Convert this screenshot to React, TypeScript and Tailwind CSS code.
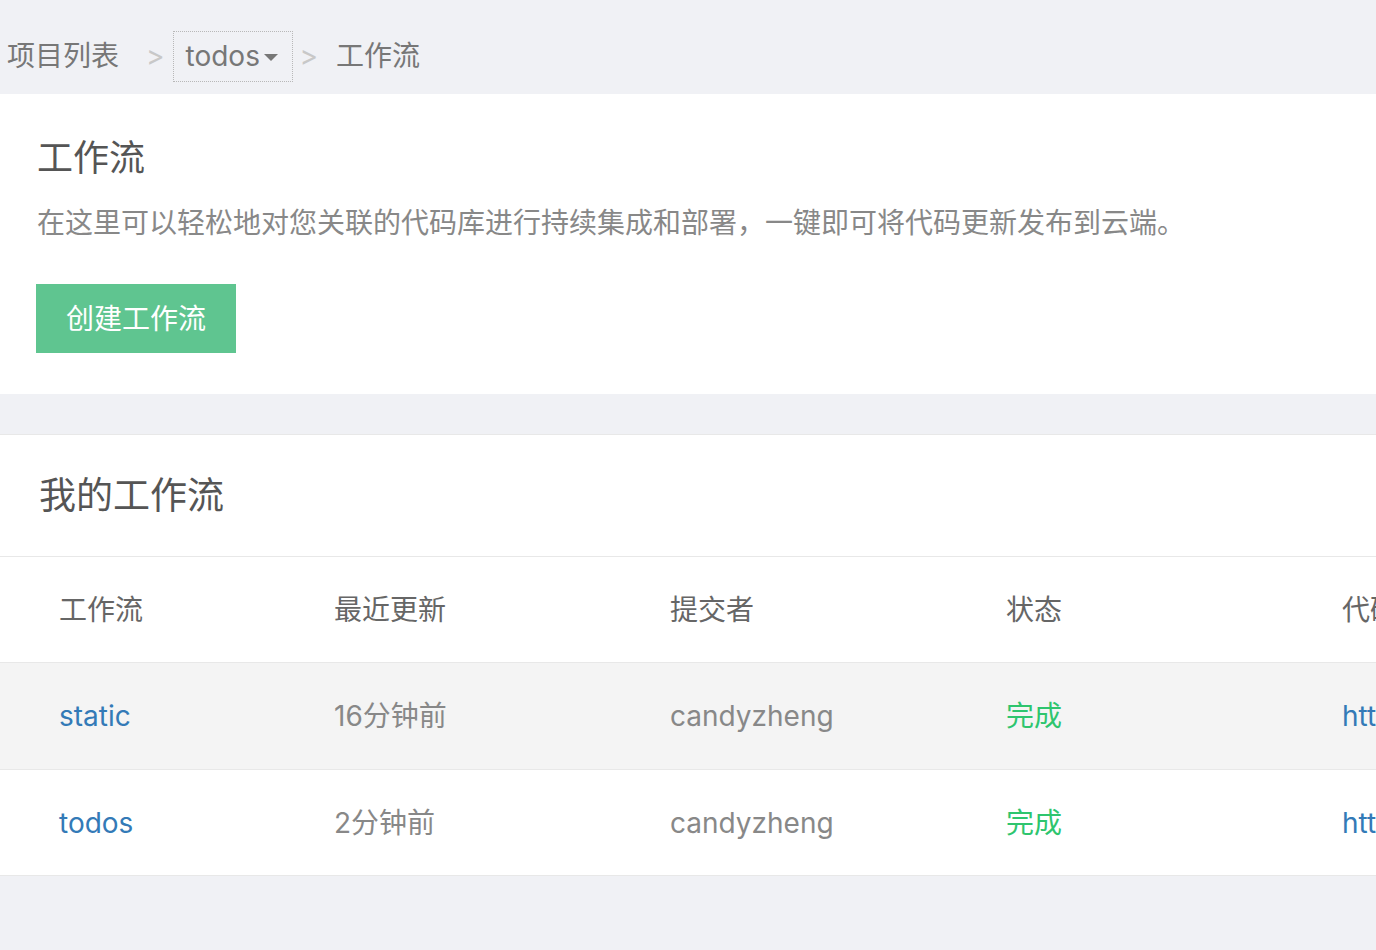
import React from 'react';

const font = { fontFamily: 'Inter, "Noto Sans CJK SC", sans-serif' };

const rows = [
  { name: 'static', time: '16分钟前', user: 'candyzheng', status: '完成', url: 'https://git.example.com/candyzheng/static.git', shade: true },
  { name: 'todos', time: '2分钟前', user: 'candyzheng', status: '完成', url: 'https://git.example.com/candyzheng/todos.git', shade: false },
];

export default function App() {
  return (
    <div className="min-h-screen w-full overflow-hidden bg-[#f0f1f5]" style={font}>
      {/* Breadcrumb */}
      <div className="flex h-[94px] items-center pl-[7px] pt-[18px] text-[28px] text-[#777]">
        <span>项目列表</span>
        <span className="ml-[27px] text-[#c8c8c8]">&gt;</span>
        <div className="ml-[8px] flex h-[51px] w-[120px] items-center border border-dotted border-[#b8b8b8] pl-[12px]">
          <span>todos</span>
          <span className="ml-[4px] mt-[2px] h-0 w-0 border-x-[7px] border-t-[7px] border-x-transparent border-t-[#777]" />
        </div>
        <span className="ml-[7px] text-[#c8c8c8]">&gt;</span>
        <span className="ml-[18px]">工作流</span>
      </div>

      {/* Intro panel */}
      <div className="bg-white px-[37px] pb-[41px] pt-[40px]">
        <h1 className="text-[36px] leading-[48px] text-[#555]">工作流</h1>
        <p className="mt-[21px] text-[28px] leading-[40px] text-[#888]">
          在这里可以轻松地对您关联的代码库进行持续集成和部署，一键即可将代码更新发布到云端。
        </p>
        <button className="ml-[-1px] mt-[41px] flex h-[69px] w-[200px] items-center justify-center bg-[#5fc590] text-[28px] text-white">
          创建工作流
        </button>
      </div>

      {/* Workflow list */}
      <div className="mt-[40px] border-y border-[#e8e8e8] bg-white">
        <div className="flex h-[122px] items-center border-b border-[#e8e8e8] pl-[39px] text-[37px] text-[#555]">
          我的工作流
        </div>
        <div className="w-[1800px] text-[28px]">
          <div className="flex h-[106px] items-center border-b border-[#e8e8e8] text-[#666]">
            <div className="w-[334px] shrink-0 pl-[59px]">工作流</div>
            <div className="w-[336px] shrink-0">最近更新</div>
            <div className="w-[336px] shrink-0">提交者</div>
            <div className="w-[336px] shrink-0">状态</div>
            <div className="shrink-0">代码库</div>
          </div>
          {rows.map((r, i) => (
            <div
              key={r.name}
              className={`flex items-center ${i < rows.length - 1 ? 'h-[107px] border-b border-[#e8e8e8]' : 'h-[105px]'} ${r.shade ? 'bg-[#f4f4f4]' : 'bg-white'}`}
            >
              <div className="w-[334px] shrink-0 pl-[59px] text-[#337ab7]">{r.name}</div>
              <div className="w-[336px] shrink-0 text-[#888]">{r.time}</div>
              <div className="w-[336px] shrink-0 text-[#888]">{r.user}</div>
              <div className="w-[336px] shrink-0 text-[#2ec56e]">{r.status}</div>
              <div className="shrink-0 text-[#337ab7]">{r.url}</div>
            </div>
          ))}
        </div>
      </div>
    </div>
  );
}
